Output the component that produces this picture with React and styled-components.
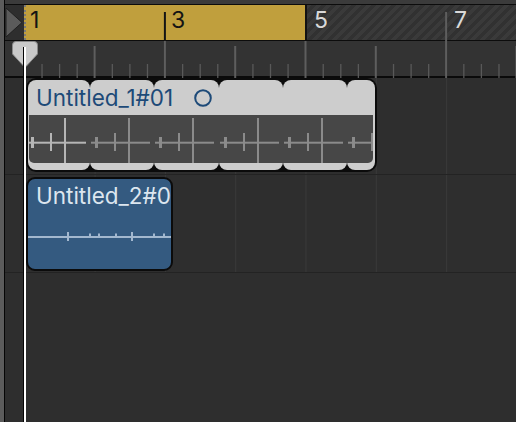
import React from 'react';
import styled, { createGlobalStyle } from 'styled-components';

const ORIGIN = 24.3; // page x of bar 1
const BAR = 70.3;
const MAIN_LEFT = 5;
const barX = (n) => ORIGIN + (n - 1) * BAR;

const Global = createGlobalStyle`
  html, body { margin: 0; padding: 0; background: #2e2e2e; }
  #root { width: 516px; height: 422px; overflow: hidden; }
  * { box-sizing: border-box; }
`;

const Screen = styled.div`
  display: flex;
  width: 516px;
  height: 422px;
  overflow: hidden;
  background: #2e2e2e;
  font-family: Inter, "Liberation Sans", Arial, sans-serif;
`;

const EdgeStrip = styled.div`
  width: 5px;
  flex-shrink: 0;
  background: #5c5c5c;
  border-right: 1px solid #060606;
`;

const Main = styled.div`
  flex: 1;
  position: relative;
  display: flex;
  flex-direction: column;
  min-width: 0;
`;

const TopStrip = styled.div`
  height: 5px;
  background: #3b3b3b;
  border-bottom: 1px solid #0c0c0c;
`;

const LoopRow = styled.div`
  position: relative;
  height: 36px;
  display: flex;
  border-bottom: 1px solid #0c0c0c;
`;

const CycleCell = styled.div`
  width: 19px;
  flex-shrink: 0;
  background: #2e2e2e;
  display: flex;
  align-items: flex-start;
`;

const CycleRegion = styled.div`
  width: 283px;
  flex-shrink: 0;
  background: #c09f3d;
  border-left: 2px dotted #7a7a7a;
  border-right: 2px solid #121212;
`;

const Hatch = styled.div`
  flex: 1;
  background: repeating-linear-gradient(
    135deg,
    #3a3a3a 0px,
    #3a3a3a 3.5px,
    #313131 3.5px,
    #313131 7px
  );
`;

const BarLabel = styled.span`
  position: absolute;
  top: 4px;
  left: ${(p) => p.$x}px;
  font-size: 23px;
  line-height: 23px;
  color: ${(p) => (p.$dark ? '#141414' : '#d9d9d9')};
`;

const Overlay = styled.svg`
  position: absolute;
  left: 0;
  top: 0;
  pointer-events: none;
`;

const Ruler = styled.div`
  height: 37px;
  background: #333333;
  border-bottom: 2px solid #0a0a0a;
`;

const Lane = styled.div`
  height: ${(p) => p.$h}px;
  flex-shrink: 0;
  display: flex;
  align-items: flex-start;
  padding-left: 21px;
  padding-top: ${(p) => p.$pt}px;
  border-bottom: 1px solid #232323;
  background-color: #2e2e2e;
  background-image: linear-gradient(90deg, #393939 0, #393939 1px, transparent 1px);
  background-size: ${BAR}px 100%;
  background-position: ${ORIGIN - MAIN_LEFT}px 0;
`;

const Rest = styled.div`
  flex: 1;
  background: #2e2e2e;
`;

const LoopedRegion = styled.div`
  width: 351px;
  height: 94px;
  padding: 2px;
  border-radius: 10px;
  background: #0b0b0b;
  display: flex;
`;

const Segment = styled.div`
  width: ${(p) => p.$w}px;
  flex-shrink: 0;
  height: 100%;
  background: #cdcdcd;
  border-radius: 8px;
  display: flex;
  flex-direction: column;
`;

const SegHead = styled.div`
  height: 35px;
  flex-shrink: 0;
  padding: 5px 0 0 8px;
`;

const Title = styled.div`
  position: relative;
  z-index: 1;
  display: flex;
  align-items: center;
  gap: 21px;
  white-space: nowrap;
  font-size: 22.5px;
  line-height: 25px;
  color: ${(p) => p.$color};
  & > * { flex-shrink: 0; }
`;

const SegWave = styled.div`
  flex: 1;
  margin: 0 ${(p) => (p.$last ? 2 : 0)}px 7px ${(p) => (p.$first ? 1 : 0)}px;
  background: #474747;
  border-radius: 0 0 ${(p) => (p.$last ? 5 : 0)}px ${(p) => (p.$first ? 5 : 0)}px;
  overflow: hidden;
  display: flex;
`;

const AudioRegion = styled.div`
  width: 147px;
  height: 94px;
  border: 2px solid #0b0b0b;
  border-radius: 9px;
  background: #345a80;
  overflow: hidden;
  display: flex;
  flex-direction: column;
  padding: 4px 0 0 8px;
`;

const WaveSvg = styled.svg`
  display: block;
  flex-shrink: 0;
`;

const Playhead = styled.div`
  position: absolute;
  left: ${12 - MAIN_LEFT}px;
  top: 41px;
  bottom: 0;
  width: 26px;
  pointer-events: none;
`;

const PlayLine = styled.div`
  position: absolute;
  left: 12px;
  top: 6px;
  bottom: 0;
  width: 2px;
  background: #ffffff;
  box-shadow: -1px 0 0 #050505;
`;

const SEG_STARTS = [26, 90.2, 154.4, 218.6, 282.8, 347];
const INNER_LEFT = 28;
const INNER_RIGHT = 375;

function SegmentWave({ start, waveLeft, first }) {
  const c = first ? '#b5b5b5' : '#8b8b8b';
  const x = (o) => start + o - waveLeft;
  return (
    <WaveSvg width="70" height="48">
      <rect x={x(1)} y={26.7} width={59} height={2} fill={c} />
      <rect x={x(5)} y={22} width={3} height={11} fill={c} />
      <rect x={x(24)} y={18} width={2} height={18} fill={c} />
      <rect x={x(38)} y={3} width={2} height={45} fill={c} />
    </WaveSvg>
  );
}

function RulerTicks() {
  const ticks = [];
  for (let b = 1; b <= 8; b++) {
    const bx = barX(b) - MAIN_LEFT;
    if (b > 1) {
      const odd = b % 2 === 1;
      ticks.push(
        <rect key={'b' + b} x={bx - 1} y={odd ? 0 : 5} width={2} height={odd ? 37 : 32} fill="#5e5e5e" />
      );
    }
    for (let q = 1; q < 4; q++) {
      const qx = bx + (q * BAR) / 4;
      ticks.push(<rect key={'q' + b + q} x={qx - 0.5} y={23} width={1.3} height={14} fill="#595959" />);
    }
  }
  return (
    <svg width="511" height="37" style={{ display: 'block' }}>
      {ticks}
    </svg>
  );
}

export default function App() {
  const segs = SEG_STARTS.map((s, i) => {
    const left = i === 0 ? INNER_LEFT : s;
    const right = i < SEG_STARTS.length - 1 ? SEG_STARTS[i + 1] : INNER_RIGHT;
    return { start: s, left, width: right - left, first: i === 0, last: i === SEG_STARTS.length - 1 };
  });

  const labels = [
    { n: '1', x: 30, dark: true },
    { n: '3', x: 171, dark: true },
    { n: '5', x: 314, dark: false },
    { n: '7', x: 454, dark: false },
  ];

  return (
    <>
      <Global />
      <Screen>
        <EdgeStrip />
        <Main>
          <TopStrip />
          <LoopRow>
            <CycleCell>
              <svg width="19" height="36">
                <polygon points="1,3 17,17.5 1,32" fill="#5b5b5b" stroke="#202020" strokeWidth="1" strokeLinejoin="round" />
              </svg>
            </CycleCell>
            <CycleRegion />
            <Hatch />
            <Overlay width="511" height="36">
              <rect x={barX(3) - MAIN_LEFT - 1} y={7} width={2} height={29} fill="#141414" />
              <rect x={barX(7) - MAIN_LEFT - 1} y={7} width={2} height={29} fill="#5e5e5e" />
            </Overlay>
            {labels.map((l) => (
              <BarLabel key={l.n} $x={l.x - MAIN_LEFT} $dark={l.dark}>
                {l.n}
              </BarLabel>
            ))}
          </LoopRow>
          <Ruler>
            <RulerTicks />
          </Ruler>
          <Lane $h={97} $pt={0}>
            <LoopedRegion>
              {segs.map((s, i) => (
                <Segment key={i} $w={s.width}>
                  <SegHead>
                    {s.first && (
                      <Title $color="#1d4a78">
                        <span>Untitled_1#01</span>
                        <svg width="18" height="18">
                          <circle cx="9" cy="9" r="7.8" fill="none" stroke="#1d4a78" strokeWidth="2" />
                        </svg>
                      </Title>
                    )}
                  </SegHead>
                  <SegWave $first={s.first} $last={s.last}>
                    <SegmentWave start={s.start} waveLeft={s.left + (s.first ? 1 : 0)} first={s.first} />
                  </SegWave>
                </Segment>
              ))}
            </LoopedRegion>
          </Lane>
          <Lane $h={98} $pt={2}>
            <AudioRegion>
              <Title $color="#dde6ef">Untitled_2#0</Title>
              <WaveSvg width="143" height="40" style={{ marginLeft: -8 }}>
                <rect x={0} y={28} width={143} height={2} fill="#a3b8cf" />
                {[67, 131].map((px) => (
                  <rect key={px} x={px - 28} y={24} width={2} height={9} fill="#a3b8cf" />
                ))}
                {[89, 98, 115, 153, 163].map((px) => (
                  <rect key={px} x={px - 28} y={25.5} width={2} height={3} fill="#a3b8cf" />
                ))}
              </WaveSvg>
            </AudioRegion>
          </Lane>
          <Rest />
          <Playhead>
            <svg width="26" height="27" style={{ display: 'block' }}>
              <path
                d="M4,0.5 H22 Q25.5,0.5 25.5,4 V13 L14,25.5 Q13,26.5 12,25.5 L0.5,13 V4 Q0.5,0.5 4,0.5 Z"
                fill="#c9c9c9"
                stroke="#8a8a8a"
                strokeWidth="1"
              />
            </svg>
            <PlayLine />
          </Playhead>
        </Main>
      </Screen>
    </>
  );
}
